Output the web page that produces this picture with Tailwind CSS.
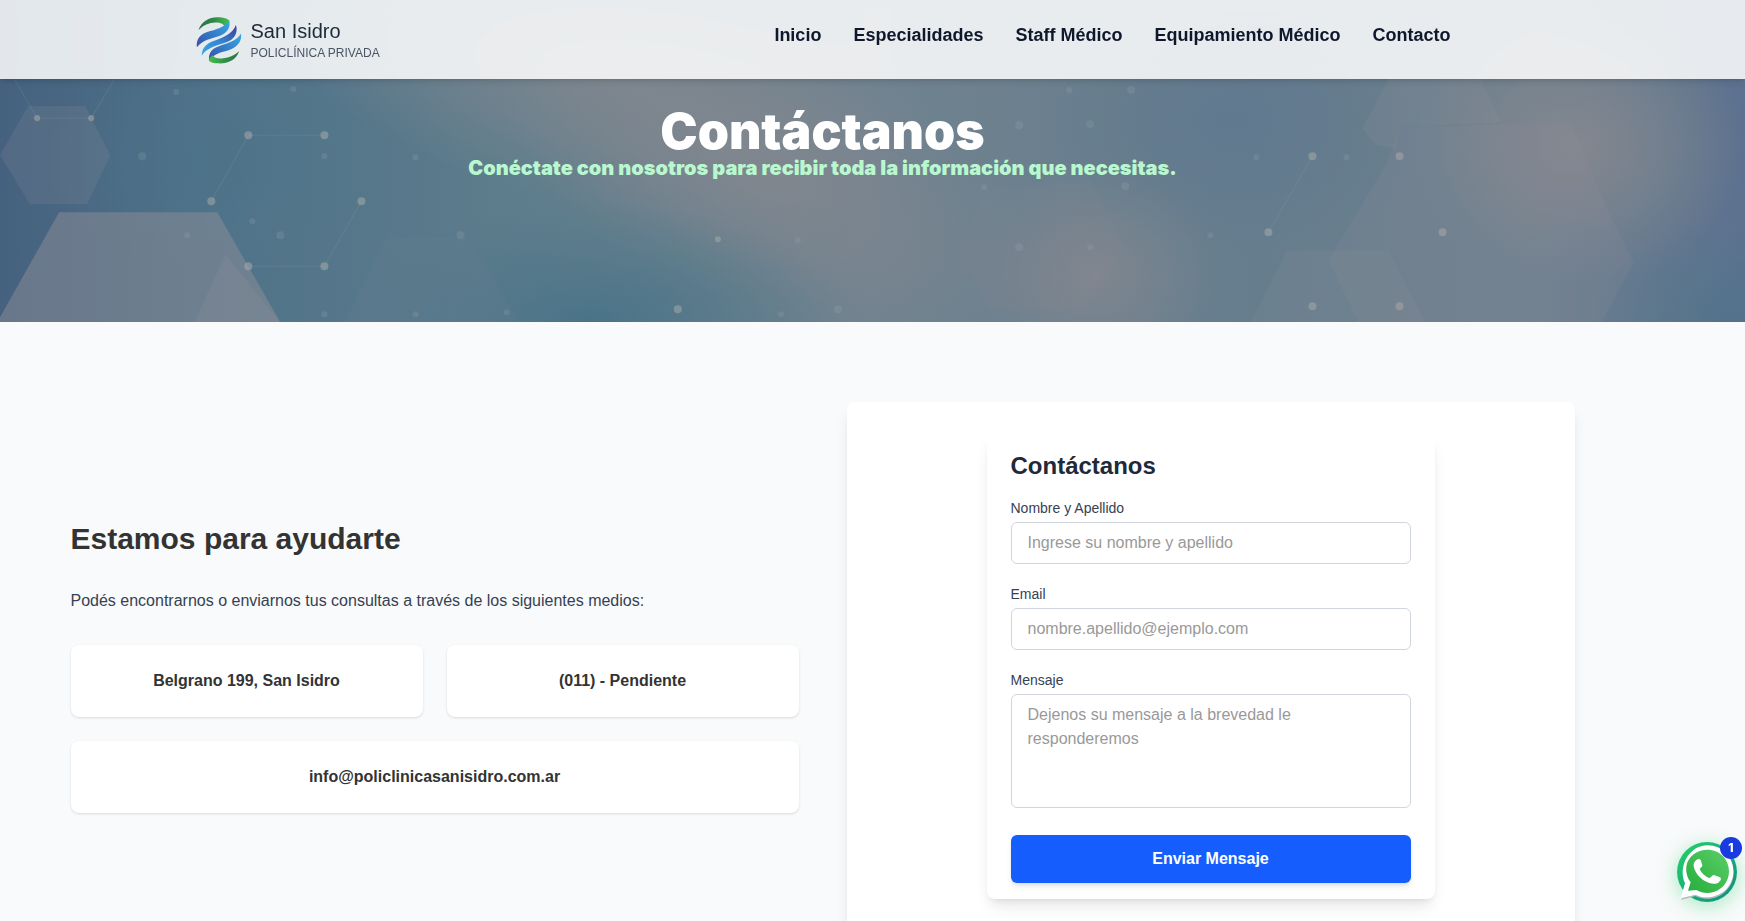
<!DOCTYPE html>
<html lang="es">
<head>
    <meta charset="UTF-8">
    <meta name="viewport" content="width=device-width, initial-scale=1.0">
    <title>Contacto | San Isidro Policlínica Privada</title>
    <script src="https://cdn.jsdelivr.net/npm/@tailwindcss/browser@4"></script>
</head>
<body class="bg-gray-50 font-['Liberation_Sans',Arial,sans-serif] text-gray-800 overflow-x-hidden">

    <!-- Header -->
    <header class="fixed top-0 inset-x-0 z-20 bg-white/85 backdrop-blur-sm shadow-md pr-25">
        <div class="max-w-7xl mx-auto px-3 h-[79px] flex items-center justify-between">
            <a href="#" class="flex items-center gap-2">
                <svg class="w-12 h-12" viewBox="45 40 144 150" aria-hidden="true">
                    <defs>
                        <linearGradient id="greenTop" x1="0" x2="1">
                            <stop offset="0" stop-color="#2a7048" />
                            <stop offset=".5" stop-color="#2f8a48" />
                            <stop offset="1" stop-color="#45c04a" />
                        </linearGradient>
                        <linearGradient id="greenBottom" x1="0" x2="1">
                            <stop offset="0" stop-color="#45c04a" />
                            <stop offset=".6" stop-color="#2f8a48" />
                            <stop offset="1" stop-color="#2a7048" />
                        </linearGradient>
                        <linearGradient id="blueA" x1="0" y1="1" x2="1" y2="0">
                            <stop offset="0" stop-color="#3d4ba6" />
                            <stop offset=".45" stop-color="#3479c4" />
                            <stop offset="1" stop-color="#38a9e6" />
                        </linearGradient>
                        <linearGradient id="blueB" x1="0" y1="1" x2="1" y2="0">
                            <stop offset="0" stop-color="#38a9e6" />
                            <stop offset=".5" stop-color="#3585d0" />
                            <stop offset="1" stop-color="#3b3f98" />
                        </linearGradient>
                    </defs>
                    <path fill="url(#greenTop)" d="M53 84C62 58 86 44 112 44C130 44 144 48 149 54C148 62 145 70 136 76C133 66 124 60 106 60C86 61 68 68 53 84Z" />
                    <path fill="url(#blueA)" d="M48 138C45 112 58 98 80 90C108 82 134 76 149 54C154 74 144 92 120 102C94 112 66 114 48 138Z" />
                    <path fill="url(#blueB)" d="M63 164C63 140 78 126 100 118C130 107 160 96 170 68C177 92 166 113 140 122C110 132 80 138 63 164Z" />
                    <path fill="url(#blueA)" d="M87 181C82 158 93 143 115 135C145 124 172 119 186 95C189 121 174 138 147 147C118 155 96 160 87 181Z" />
                    <path fill="url(#greenBottom)" d="M180 150C170 178 145 189 115 188C101 188 90 185 85 180C87 172 91 167 97 163C103 172 115 174 130 172C150 170 166 163 180 150Z" />
                </svg>
                <span class="flex flex-col pt-0.5">
                    <span class="text-xl leading-6 text-gray-800">San Isidro</span>
                    <span class="text-xs leading-5 text-gray-600">POLICLÍNICA PRIVADA</span>
                </span>
            </a>
            <nav class="flex gap-8 mb-2.5 text-lg font-bold text-slate-900">
                <a href="#" class="hover:text-blue-600">Inicio</a>
                <a href="#" class="hover:text-blue-600">Especialidades</a>
                <a href="#" class="hover:text-blue-600">Staff Médico</a>
                <a href="#" class="hover:text-blue-600">Equipamiento Médico</a>
                <a href="#" class="hover:text-blue-600">Contacto</a>
            </nav>
        </div>
    </header>

    <!-- Hero -->
    <section class="relative h-[35vh] overflow-hidden bg-[#5f7a8c]">
        <svg class="absolute inset-0 w-full h-full" viewBox="0 0 1745 322" preserveAspectRatio="xMidYMid slice" aria-hidden="true">
            <defs>
                <linearGradient id="base" x1="0" x2="1">
                    <stop offset="0" stop-color="#45617f" />
                    <stop offset=".12" stop-color="#4f7289" />
                    <stop offset=".3" stop-color="#5e7d8c" />
                    <stop offset=".5" stop-color="#70828f" />
                    <stop offset=".72" stop-color="#657d8d" />
                    <stop offset=".88" stop-color="#6d808e" />
                    <stop offset="1" stop-color="#5c718f" />
                </linearGradient>
                <radialGradient id="warm"><stop offset="0" stop-color="#86888f" /><stop offset=".5" stop-color="#82878f" stop-opacity=".6" /><stop offset="1" stop-color="#7a858f" stop-opacity="0" /></radialGradient>
                <radialGradient id="teal"><stop offset="0" stop-color="#4a7388" /><stop offset="1" stop-color="#4f788a" stop-opacity="0" /></radialGradient>
                <radialGradient id="blue"><stop offset="0" stop-color="#61798f" /><stop offset="1" stop-color="#61798f" stop-opacity="0" /></radialGradient>
            </defs>
            <rect width="1745" height="322" fill="url(#base)" />
            <ellipse cx="610" cy="80" rx="340" ry="130" fill="url(#warm)" opacity=".75" transform="rotate(12 610 80)" />
            <ellipse cx="770" cy="180" rx="290" ry="140" fill="url(#warm)" opacity=".75" transform="rotate(25 770 180)" />
            <ellipse cx="590" cy="322" rx="260" ry="120" fill="url(#teal)" />
            <ellipse cx="210" cy="160" rx="160" ry="110" fill="url(#teal)" opacity=".5" />
            <ellipse cx="1230" cy="120" rx="190" ry="130" fill="url(#blue)" />
            <ellipse cx="1095" cy="275" rx="130" ry="110" fill="url(#warm)" opacity=".75" />
            <ellipse cx="1575" cy="145" rx="170" ry="140" fill="url(#warm)" opacity=".9" />
            <ellipse cx="1730" cy="322" rx="140" ry="100" fill="url(#teal)" opacity=".6" />

            <!-- hexagons -->
            <g fill="#94929a">
                <path d="M29 106H86L111 155L88 204H31L1 155Z" opacity=".18" />
                <path d="M60 212H218L281 322H-2Z" opacity=".45" />
                <path d="M226 254L281 322H195Z" opacity=".2" />
                <path d="M387 238H470L520 322H344Z" opacity=".07" />
                <path d="M1388 79L1362 128L1375 145L1395 148L1400 127L1500 122L1480 79Z" opacity=".18" />
                <path d="M1400 127L1570 122L1607 210L1633 262L1601 322H1358L1328 260L1385 165Z" opacity=".16" />
                <path d="M1287 250H1388L1425 322H1250Z" opacity=".14" />
                <path d="M985 190L1090 180L1125 250L1085 311H990L955 250Z" opacity=".08" />
            </g>

            <!-- links between nodes -->
            <g fill="none" stroke="#a3b0b4" stroke-width="1" opacity=".15">
                <path d="M38 118H92L115 80M38 118L16 80" />
                <path d="M212 201L249 135H325M362 201L325 266H249" />
                <path d="M1312 156L1268 232" />
            </g>

            <!-- nodes -->
            <g fill="#a5a9a8" opacity=".55">
                <circle cx="38" cy="118" r="3" /><circle cx="92" cy="118" r="3" />
                <circle cx="249" cy="135" r="4" /><circle cx="325" cy="135" r="4" />
                <circle cx="212" cy="201" r="4" /><circle cx="362" cy="201" r="4" />
                <circle cx="249" cy="266" r="4" /><circle cx="325" cy="266" r="4" />
                <circle cx="678" cy="309" r="4" /><circle cx="718" cy="239" r="3" />
                <circle cx="1312" cy="156" r="4" /><circle cx="1399" cy="156" r="4" />
                <circle cx="1268" cy="232" r="4" /><circle cx="1442" cy="232" r="4" />
                <circle cx="1312" cy="306" r="4" /><circle cx="1399" cy="306" r="4" />
            </g>
            <g fill="#9eaeb4" opacity=".2">
                <circle cx="143" cy="156" r="4" /><circle cx="325" cy="156" r="3" /><circle cx="416" cy="157" r="3" />
                <circle cx="253" cy="221" r="3" /><circle cx="188" cy="235" r="3" /><circle cx="281" cy="235" r="4" />
                <circle cx="461" cy="235" r="4" /><circle cx="325" cy="314" r="3" /><circle cx="416" cy="314" r="3" />
                <circle cx="507" cy="312" r="3" /><circle cx="294" cy="89" r="3" /><circle cx="177" cy="92" r="3" />
                <circle cx="838" cy="309" r="4" /><circle cx="781" cy="314" r="3" /><circle cx="798" cy="240" r="3" />
                <circle cx="1069" cy="90" r="3" /><circle cx="1131" cy="90" r="4" /><circle cx="1019" cy="125" r="4" />
                <circle cx="1090" cy="124" r="4" /><circle cx="984" cy="187" r="3" /><circle cx="1125" cy="186" r="4" />
                <circle cx="1019" cy="247" r="4" /><circle cx="1090" cy="247" r="3" /><circle cx="1256" cy="157" r="3" />
                <circle cx="1346" cy="157" r="3" /><circle cx="1210" cy="235" r="3" />
            </g>
        </svg>
        <div class="relative pt-26 pr-25 text-center font-['Inter',sans-serif] font-black">
            <h1 class="text-[50px] leading-[54px] text-white">Contáctanos</h1>
            <p class="text-xl leading-5 text-green-200">Conéctate con nosotros para recibir toda la información que necesitas.</p>
        </div>
    </section>

    <!-- Contact -->
    <main class="py-20 pr-25">
        <div class="max-w-[1536px] mx-auto px-4 grid grid-cols-2 gap-12 items-center">
            <section>
                <h2 class="text-3xl font-bold text-[#333333] mb-8">Estamos para ayudarte</h2>
                <p class="text-gray-700 mb-8">Podés encontrarnos o enviarnos tus consultas a través de los siguientes medios:</p>
                <div class="grid grid-cols-2 gap-6 text-center font-bold text-[#333333]">
                    <div class="bg-white rounded-lg shadow-sm p-6">Belgrano 199, San Isidro</div>
                    <div class="bg-white rounded-lg shadow-sm p-6">(011) - Pendiente</div>
                    <div class="bg-white rounded-lg shadow-sm p-6 col-span-2">info@policlinicasanisidro.com.ar</div>
                </div>
            </section>

            <section class="bg-white rounded-lg shadow-lg p-8">
                <form class="max-w-md mx-auto bg-white rounded-lg shadow-lg px-6 py-4">
                    <h2 class="text-2xl font-bold text-gray-800 mb-4">Contáctanos</h2>
                    <div class="mb-5">
                        <label for="nombre" class="block text-sm text-gray-700 mb-1">Nombre y Apellido</label>
                        <input type="text" id="nombre" placeholder="Ingrese su nombre y apellido" class="block w-full px-4 py-2 border border-gray-300 rounded-md placeholder:text-[#999999] focus:outline-none focus:ring-2 focus:ring-blue-500">
                    </div>
                    <div class="mb-5">
                        <label for="email" class="block text-sm text-gray-700 mb-1">Email</label>
                        <input type="email" id="email" placeholder="nombre.apellido@ejemplo.com" class="block w-full px-4 py-2 border border-gray-300 rounded-md placeholder:text-[#999999] focus:outline-none focus:ring-2 focus:ring-blue-500">
                    </div>
                    <div class="mb-5">
                        <label for="mensaje" class="block text-sm text-gray-700 mb-1">Mensaje</label>
                        <textarea id="mensaje" rows="4" placeholder="Dejenos su mensaje a la brevedad le responderemos" class="w-full px-4 py-2 border border-gray-300 rounded-md resize-none placeholder:text-[#999999] focus:outline-none focus:ring-2 focus:ring-blue-500"></textarea>
                    </div>
                    <button type="submit" class="w-full py-3 bg-[#155dfc] text-white font-bold rounded-md shadow-md hover:bg-blue-700 transition-colors">Enviar Mensaje</button>
                </form>
            </section>
        </div>
    </main>

    <!-- WhatsApp -->
    <a href="#" aria-label="WhatsApp" class="fixed right-2 bottom-[19px] z-30 size-15 rounded-full bg-linear-to-br from-[#25d366] to-[#128c7e] shadow-[0_4px_20px_rgba(37,211,102,0.4)]">
        <svg class="size-15 overflow-visible" viewBox="111 66 180 180" aria-hidden="true">
            <defs>
                <linearGradient id="wa" x1="1" y1="0" x2="0" y2="1">
                    <stop offset="0" stop-color="#5bcf66" />
                    <stop offset="1" stop-color="#25ad3c" />
                </linearGradient>
            </defs>
            <path fill="#b5bcc0" d="M124 240L138 194C118 148 147 83 203 80C250 80 282 117 281 158C280 205 240 240 195 236C185 235 175 232 166 228Z" />
            <path fill="#fff" d="M122 235L135 190C113 140 147 76 203 76C247 76 280 112 280 154C280 200 243 232 200 232C188 232 176 229 166 224Z" />
            <path fill="url(#wa)" d="M144 212L152 187C120 140 150 89 203 89C239 89 267 118 267 154C267 191 238 219 202 219C190 219 180 216 169 210Z" />
            <path fill="#fff" d="M163 127C168 118 178 113 182 120L187 136C188 141 178 145 180 149C185 160 195 168 207 174C212 176 216 165 221 165L240 172C246 176 241 184 235 188C224 195 207 190 195 183C180 174 167 160 162 143C160 137 161 131 163 127Z" />
        </svg>
        <span class="absolute -top-[5px] -right-[5px] size-[22px] rounded-full bg-[#1a3be0] text-white font-['Inter',sans-serif] text-xs font-extrabold flex items-center justify-center">1</span>
    </a>
</body>
</html>
